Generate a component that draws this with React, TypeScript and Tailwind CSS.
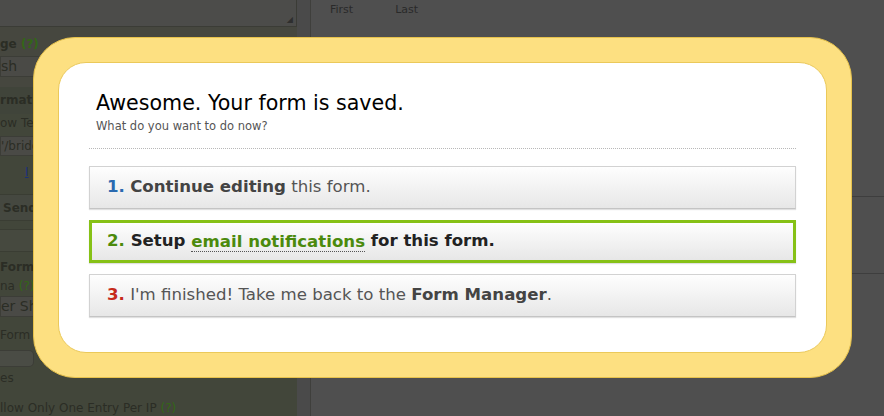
import React from "react";

const font = { fontFamily: '"DejaVu Sans", "Liberation Sans", sans-serif' };

const Sidebar = () => (
  <div className="w-[297px] shrink-0 bg-[#42463a] text-[12px] text-[#2b2d25] flex flex-col">
    <div className="h-[30px] bg-[#4c4c4a] border-b border-r border-[#3b3c36] relative">
      <span className="absolute right-[3px] bottom-[2px] text-[8px] text-[#2e2e2e] leading-none">◢</span>
    </div>
    <div className="bg-[#46473f] pt-[9px] pb-[10px] flex flex-col gap-[4px]">
      <div className="font-bold leading-[16px]">
        ge <span className="text-[#336617]">(?)</span>
      </div>
      <div className="h-[21px] mr-[8px] bg-[#4a4a46] border border-[#3c3d37] text-[14px] leading-[19px]">sh</div>
    </div>
    <div className="h-[30px] flex items-center font-bold bg-[#40443a]">rmatio</div>
    <div className="h-[22px] flex items-center">ow Te</div>
    <div className="mt-[3px] h-[20px] mr-[8px] bg-[#4a4a46] border border-[#3c3d37] leading-[18px]">'/bridg</div>
    <div className="h-[36px] flex items-center pl-[25px]">
      <span className="text-[#1a2f7a] underline">I</span>
    </div>
    <div className="mt-[6px] h-[30px] flex items-center font-bold bg-[#454840] border-y border-[#3a3d33] pl-[3px]">Send</div>
    <div className="mt-[8px] h-[26px] bg-[#46493f] border-y border-[#3a3d33]"></div>
    <div className="h-[27px] flex items-end font-bold">Form</div>
    <div className="h-[22px] flex items-center">
      na&nbsp;<span className="text-[#336617]">(?)</span>
    </div>
    <div className="h-[21px] mr-[8px] bg-[#4a4a46] border border-[#3c3d37] text-[14px] leading-[19px]">er Sh</div>
    <div className="h-[30px] flex items-end">Form C</div>
    <div className="mt-[6px] h-[19px] w-[34px] bg-[#4a4c45] rounded-r-[5px] border border-l-0 border-[#3c3d37]"></div>
    <div className="h-[26px] flex items-center">es</div>
    <div className="mt-[10px] leading-[16px] whitespace-nowrap">
      llow Only One Entry Per IP <span className="text-[#336617]">(?)</span>
    </div>
  </div>
);

const Main = () => (
  <div className="flex-1 flex flex-col text-[11px] text-[#2a2a2a]">
    <div className="h-[197px] border-b border-[#3e3e3e] flex gap-[42px] pl-[19px] pt-[2px]">
      <span>First</span>
      <span>Last</span>
    </div>
    <div className="h-[77px] border-b border-[#3e3e3e]"></div>
    <div className="flex-1"></div>
  </div>
);

const btnBase =
  "h-[43px] flex items-center text-[16.6px] bg-linear-to-b from-[#fefefe] to-[#e7e7e7] shadow-[0_1px_1px_rgba(0,0,0,0.12)]";

const Modal = () => (
  <div
    className="absolute left-[33px] top-[37px] w-[819px] h-[341px] rounded-[42px] bg-[#fde081] border border-[#e7c24c] p-[24px]"
    style={font}
  >
    <div className="h-full rounded-[28px] bg-white border border-[#ebc95a] pt-[26px] px-[30px]">
      <div className="pl-[7px]">
        <div className="text-[20.6px] leading-[28px] text-black">Awesome. Your form is saved.</div>
        <div className="mt-[2px] text-[11.5px] leading-[15px] text-[#555]">What do you want to do now?</div>
      </div>
      <div className="mt-[14px] border-t border-dotted border-[#b8b8b8]"></div>
      <div className="mt-[17px] flex flex-col gap-[11px]">
        <div className={`${btnBase} border border-[#d2d2d2] border-b-[#c4c4c4] pl-[17px] text-[#555]`}>
          <span className="font-bold text-[#2a6ab0]">1.</span>&nbsp;
          <span className="font-bold text-[#444]">Continue editing</span>&nbsp;this form.
        </div>
        <div className={`${btnBase} border-[3px] border-[#86c116] pl-[15px] font-bold text-[#222]`}>
          <span className="text-[#4b8a0c]">2.</span>&nbsp;Setup&nbsp;
          <span className="text-[#4b8a0c] border-b border-dotted border-[#555] leading-[19px]">email notifications</span>
          &nbsp;for this form.
        </div>
        <div className={`${btnBase} border border-[#d2d2d2] border-b-[#c4c4c4] pl-[17px] text-[#555]`}>
          <span className="font-bold text-[#c62a1c]">3.</span>&nbsp;I'm finished! Take me back to the&nbsp;
          <span className="font-bold text-[#444]">Form Manager</span>.
        </div>
      </div>
    </div>
  </div>
);

export default function App() {
  return (
    <div className="relative w-[884px] h-[416px] overflow-hidden bg-[#4f4f4f] flex" style={font}>
      <Sidebar />
      <div className="w-[14px] shrink-0 bg-[#4a4a4a] border-r border-[#3f3f3c]"></div>
      <Main />
      <Modal />
    </div>
  );
}
